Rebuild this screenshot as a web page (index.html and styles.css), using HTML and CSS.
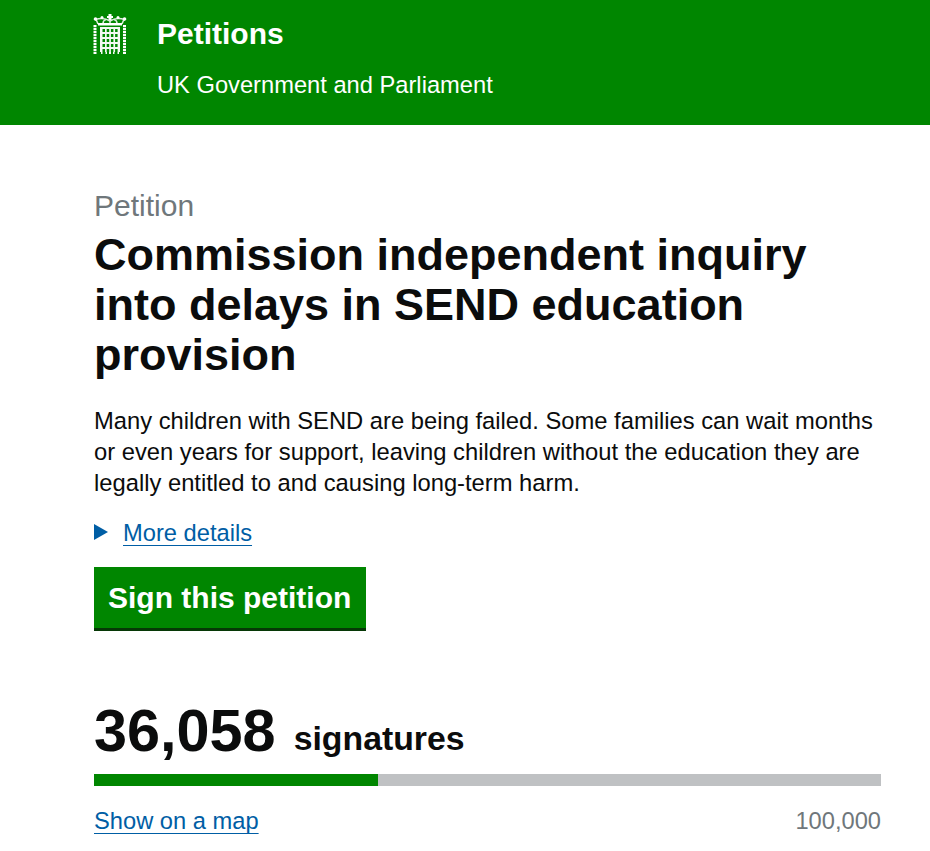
FILE: index.html
```html
<!DOCTYPE html>
<html lang="en">
<head>
<meta charset="utf-8">
<title>Petitions</title>
<link rel="stylesheet" href="styles.css">
</head>
<body>
<header class="site-header">
  <div class="brand">
    <svg class="crest" viewBox="0 0 34 40" width="34" height="40" aria-hidden="true">
      <g fill="#fff">
        <path d="M15.500 0h3v2h1.500v2h-1.500v2h-3V4H14V2h1.500z"/>
        <circle cx="2.500" cy="5" r="1.800"/><circle cx="31.500" cy="5" r="1.800"/>
        <circle cx="9" cy="3.500" r="1.500"/><circle cx="25" cy="3.500" r="1.500"/>
        <path d="M5 9h24v2.500H5z"/>
      </g>
      <g fill="none" stroke="#fff" stroke-width="1.500" opacity="0.85">
        <path d="M5 10C4 7 3.500 6 2.500 5.500 7 4 13 4.500 17 7c4-2.500 10-3 14.500-1.500C30.500 6 30 7 29 10"/>
        <path d="M10 9.500c0-2 1-3.500 3-4M24 9.500c0-2-1-3.500-3-4M17 5v5"/>
      </g>
      <path d="M2 11v29M31.500 11v29" fill="none" stroke="#fff" stroke-width="3" stroke-dasharray="2.200 .8"/>
      <path fill="#fff" opacity="0.95" fill-rule="evenodd" d="M7 13h20v25h-1v2h-1.500v-2h-3v2H20v-2h-2v2h-2v-2h-2v2h-1.500v-2h-3v2H8v-2H7zM9.500 15v3h2.500v-3zM13.700 15v3h2.500v-3zM17.900 15v3h2.500v-3zM22.100 15v3h2.500v-3zM9.500 20v3h2.500v-3zM13.700 20v3h2.500v-3zM17.900 20v3h2.500v-3zM22.100 20v3h2.500v-3zM9.500 25v3h2.500v-3zM13.700 25v3h2.500v-3zM17.900 25v3h2.500v-3zM22.100 25v3h2.500v-3zM9.500 30v3h2.500v-3zM13.700 30v3h2.500v-3zM17.900 30v3h2.500v-3zM22.100 30v3h2.500v-3zM9.500 35v3h2.500v-3zM13.700 35v3h2.500v-3zM17.900 35v3h2.500v-3zM22.100 35v3h2.500v-3z"/>
    </svg>
    <div class="brand-text">
      <div class="brand-title">Petitions</div>
      <div class="brand-sub">UK Government and Parliament</div>
    </div>
  </div>
</header>
<main class="content">
  <p class="kicker">Petition</p>
  <h1 class="title">Commission independent inquiry into delays in SEND education provision</h1>
  <p class="summary">Many children with SEND are being failed. Some families can wait months or even years for support, leaving children without the education they are legally entitled to and causing long-term harm.</p>
  <div class="details">
    <span class="arrow"></span>
    <a class="link" href="#">More details</a>
  </div>
  <a class="button" href="#">Sign this petition</a>
  <div class="count">
    <span class="count-num">36,058</span>
    <span class="count-label">signatures</span>
  </div>
  <div class="progress"><div class="progress-fill" style="width:36.058%"></div></div>
  <div class="progress-foot">
    <a class="link" href="#">Show on a map</a>
    <span class="goal">100,000</span>
  </div>
</main>
</body>
</html>
```

FILE: styles.css
```css
* { box-sizing: border-box; }
html, body { margin: 0; padding: 0; }
body {
  background: #fff;
  color: #0b0c0c;
  font-family: "Liberation Sans", Arial, sans-serif;
  height: 851px;
  overflow: hidden;
}
.site-header {
  background: #008600;
  color: #fff;
  height: 125px;
  padding: 14px 49px 0 93px;
}
.brand { display: flex; gap: 30px; align-items: flex-start; }
.crest { display: block; flex: none; }
.brand-title { font-size: 30px; font-weight: 700; line-height: 40px; }
.brand-sub { font-size: 23.7px; line-height: 30px; margin-top: 16px; }
.content { padding: 0 49px 0 94px; }
.kicker { margin: 65px 0 0; font-size: 30px; line-height: 32px; color: #6f777b; }
.title { margin: 8px 0 0; font-size: 45px; line-height: 50px; font-weight: 700; }
.summary { margin: 25px 0 0; font-size: 23.75px; line-height: 31px; }
.details { display: flex; align-items: center; margin-top: 20px; height: 31px; }
.arrow {
  width: 0; height: 0;
  border-style: solid;
  border-width: 8px 0 8px 14px;
  border-color: transparent transparent transparent #005ea5;
  margin-right: 15px;
  margin-bottom: 3px;
}
.link {
  color: #005ea5;
  font-size: 23.7px;
  line-height: 31px;
  text-decoration: underline;
  text-decoration-thickness: 1px;
  text-underline-offset: 4px;
  text-decoration-skip-ink: none;
}
.button {
  display: block;
  width: 272px;
  height: 64px;
  margin-top: 18px;
  background: #008600;
  border-bottom: 3px solid #063806;
  color: #fff;
  font-size: 30px;
  font-weight: 700;
  line-height: 61px;
  padding-left: 14px;
  text-decoration: none;
}
.count { display: flex; align-items: baseline; gap: 18px; margin-top: 64px; line-height: 72px; height: 72px; }
.count-num { font-size: 59.4px; font-weight: 700; }
.count-label { font-size: 33.8px; font-weight: 700; transform: translateY(-1px); }
.progress { height: 12px; background: #bfc1c3; margin-top: 7px; }
.progress-fill { height: 100%; background: #008600; }
.progress-foot { display: flex; justify-content: space-between; margin-top: 20px; line-height: 31px; }
.goal { color: #6f777b; font-size: 23.7px; line-height: 31px; }
```
